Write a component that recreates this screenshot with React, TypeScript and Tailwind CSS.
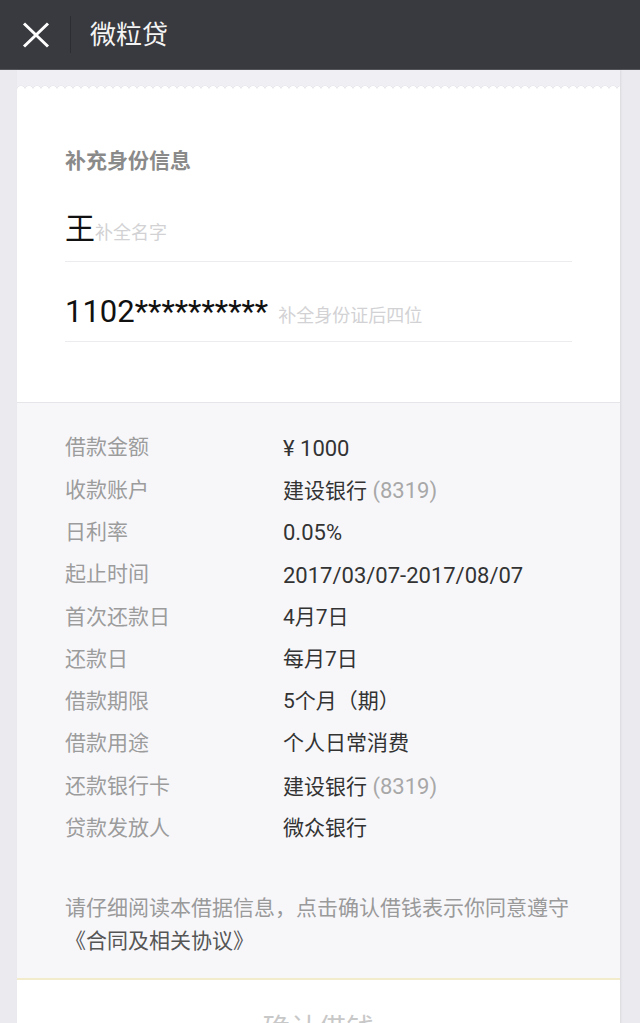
import React from "react";

const rows: { label: string; value: string; latin?: boolean; extra?: string }[] = [
  { label: "借款金额", value: "¥ 1000", latin: true },
  { label: "收款账户", value: "建设银行", extra: " (8319)" },
  { label: "日利率", value: "0.05%", latin: true },
  { label: "起止时间", value: "2017/03/07-2017/08/07", latin: true },
  { label: "首次还款日", value: "4月7日" },
  { label: "还款日", value: "每月7日" },
  { label: "借款期限", value: "5个月（期）" },
  { label: "借款用途", value: "个人日常消费" },
  { label: "还款银行卡", value: "建设银行", extra: " (8319)" },
  { label: "贷款发放人", value: "微众银行" },
];

export default function App() {
  return (
    <div className="min-h-screen bg-[#eaeaef] font-['Roboto','Noto_Sans_CJK_SC',sans-serif]">
      {/* Header */}
      <div className="flex h-[70px] items-center bg-[#393a3f] border-b border-[#55565b]">
        <div className="flex w-[70px] justify-center pl-[1px]">
          <svg width="28" height="26" viewBox="0 0 28 26">
            <path d="M2 1.5 L26 24.5 M26 1.5 L2 24.5" stroke="#ffffff" strokeWidth="3" strokeLinecap="butt" />
          </svg>
        </div>
        <div className="h-[37px] w-px bg-[#2c2d31]" />
        <div className="pl-[19px] text-[26px] leading-none text-[#f4f4f4]">微粒贷</div>
      </div>

      {/* Card */}
      <div className="ml-[17px] mr-[20px] shadow-[1px_0_2px_rgba(0,0,0,0.07)]">
        <div className="bg-[#f0f0f4] pt-[14px]">
          <div className="h-[6px] bg-repeat-x bg-[radial-gradient(circle_at_4px_6px,#ffffff_3.6px,#e6e6ea_4.2px,transparent_4.8px)] bg-[length:8px_6px]" />
        </div>
        <div>
          {/* White section */}
          <div className="bg-white px-[48px] pt-[56px] pb-[60px]">
            <div className="text-[21px] font-bold leading-[30px] text-[#8a8a8a]">补充身份信息</div>
            <div className="flex items-baseline border-b border-[#ececef] pt-[38px] pb-[17px]">
              <span className="text-[30px] leading-[30px] text-[#111]">王</span>
              <span className="text-[18px] leading-[18px] text-[#d2d2d4]">补全名字</span>
            </div>
            <div className="flex items-baseline border-b border-[#ececef] pt-[34px] pb-[14px]">
              <span className="text-[31px] leading-[31px] text-[#111]">1102**********</span>
              <span className="ml-[10px] text-[18px] leading-[18px] text-[#d2d2d4]">补全身份证后四位</span>
            </div>
          </div>

          {/* Gray info section */}
          <div className="border-t border-[#e6e6ea] bg-[#f7f7fa] px-[48px] pt-[24px] pb-[20px]">
            {rows.map((r) => (
              <div key={r.label} className="flex h-[42.3px] items-center text-[21px]">
                <div className="w-[218px] shrink-0 text-[#9c9c9c]">{r.label}</div>
                <div className={r.latin ? "text-[22px] text-[#333333]" : "text-[#333333]"}>
                  {r.value}
                  {r.extra && <span className="text-[22px] text-[#a8a8a8]">{r.extra}</span>}
                </div>
              </div>
            ))}
            <div className="mt-[42px] text-[21px] leading-[33px] text-[#9a9a9a]">
              <div className="whitespace-nowrap">请仔细阅读本借据信息，点击确认借钱表示你同意遵守</div>
              <div className="whitespace-nowrap text-[#555555]">《合同及相关协议》</div>
            </div>
          </div>

          {/* Button */}
          <div className="h-[2px] bg-[#f2ebcc]" />
          <div className="flex h-[100px] items-center justify-center bg-white">
            <span className="text-[28px] text-[#c8c8c8]">确认借钱</span>
          </div>
        </div>
      </div>
    </div>
  );
}
